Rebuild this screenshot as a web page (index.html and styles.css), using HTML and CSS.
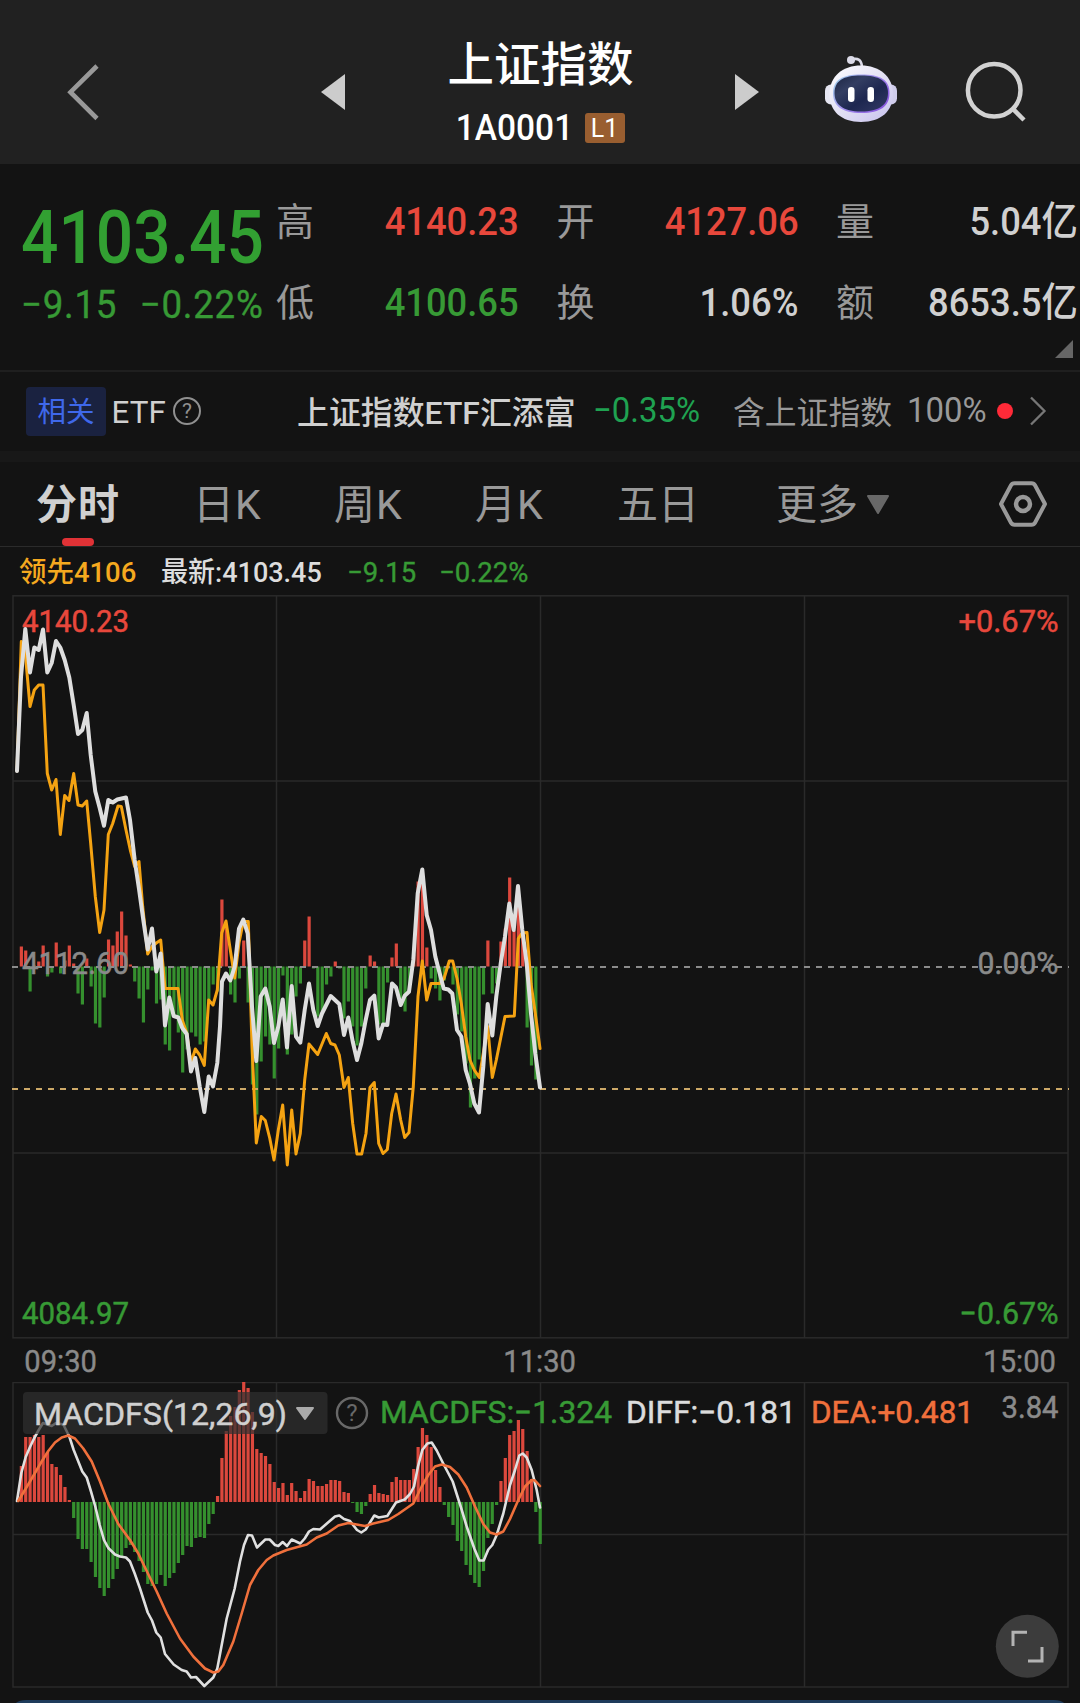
FILE: index.html
```
<!DOCTYPE html>
<html lang="zh-CN">
<head>
  <meta charset="UTF-8" />
  <meta name="viewport" content="width=device-width, initial-scale=1" />
  <title>上证指数 1A0001</title>
  <link rel="stylesheet" href="styles.css">
</head>
<body>
  <header class="header">
    <svg class="back" width="46" height="70" viewBox="60 60 46 70"><path d="M97 66L70.500 92.200L97 118.500" fill="none" stroke="#999" stroke-width="4.600"/></svg>
    <svg class="prev" width="24" height="36" viewBox="0 0 24 36"><path d="M24 0V36L0 18z" fill="#ccc"/></svg>
    <div class="title">
      <h1>上证指数</h1>
      <div class="code"><span class="code-num">1A0001</span><span class="level">L1</span></div>
    </div>
    <svg class="next" width="24" height="36" viewBox="0 0 24 36"><path d="M0 0V36L24 18z" fill="#ccc"/></svg>
    <svg class="robot" width="74" height="72" viewBox="824 54 74 72">
      <defs>
        <linearGradient id="shell" x1="0" y1="0" x2="0.900" y2="1">
          <stop offset="0" stop-color="#ffffff"/><stop offset="0.500" stop-color="#e4e2f4"/><stop offset="1" stop-color="#c9c4ee"/>
        </linearGradient>
        <linearGradient id="rim" x1="0" y1="0" x2="1" y2="0.600">
          <stop offset="0" stop-color="#9fd8ea"/><stop offset="0.500" stop-color="#a493ee"/><stop offset="1" stop-color="#8b5be0"/>
        </linearGradient>
        <linearGradient id="face" x1="0" y1="0" x2="1" y2="1">
          <stop offset="0" stop-color="#1c2543"/><stop offset="0.300" stop-color="#333e62"/><stop offset="0.600" stop-color="#1d2750"/><stop offset="1" stop-color="#343a66"/>
        </linearGradient>
      </defs>
      <path d="M851.500 59.500C858 57.500 861.500 60 862 67" fill="none" stroke="#dcdbe8" stroke-width="2.600"/>
      <circle cx="851" cy="60" r="4" fill="#dcdbe8"/>
      <rect x="825" y="84.500" width="12" height="20" rx="6" fill="#e6e6f2"/>
      <rect x="885" y="84.500" width="12" height="20" rx="6" fill="#d0cdec"/>
      <path d="M861 65.500C879 65.500 893 76 893 94C893 111 881 122 861 122C841 122 829.500 111 829.500 94C829.500 76 843 65.500 861 65.500z" fill="url(#shell)"/>
      <path d="M861 74.500C881 74.500 889.500 80 889.500 93C889.500 106 881 113 861 113C842 113 833 106 833 93C833 80 842 74.500 861 74.500z" fill="url(#rim)"/>
      <path d="M861 75.500C879.500 75.500 888 81 888 93C888 104.500 879.500 111.500 861 111.500C843 111.500 834.500 104.500 834.500 93C834.500 81 843 75.500 861 75.500z" fill="url(#face)"/>
      <rect x="848" y="87" width="6.500" height="15" rx="3.200" fill="#fff"/>
      <rect x="867.500" y="87" width="6.500" height="15" rx="3.200" fill="#fff"/>
    </svg>
    <svg class="search" width="62" height="64" viewBox="964 60 62 64"><circle cx="994.200" cy="90.300" r="26.300" fill="none" stroke="#d2d2d2" stroke-width="4.500"/><path d="M1012.500 108.500L1024 120" stroke="#d2d2d2" stroke-width="4.500"/></svg>
  </header>

  <section class="quote">
    <div class="price-box">
      <div class="price">4103.45</div>
      <div class="change down"><span>−9.15</span><span>−0.22%</span></div>
    </div>
    <div class="stats">
      <div class="stat"><label>高</label><b class="up">4140.23</b></div>
      <div class="stat"><label>开</label><b class="up">4127.06</b></div>
      <div class="stat"><label>量</label><b>5.04<i>亿</i></b></div>
      <div class="stat"><label>低</label><b class="down">4100.65</b></div>
      <div class="stat"><label>换</label><b>1.06%</b></div>
      <div class="stat"><label>额</label><b>8653.5<i>亿</i></b></div>
    </div>
    <div class="corner"></div>
  </section>

  <section class="etf">
    <span class="tag">相关</span>
    <span class="etf-label">ETF</span>
    <span class="help">?</span>
    <span class="etf-name">上证指数ETF汇添富</span>
    <span class="etf-rate">−0.35%</span>
    <span class="etf-hold">含上证指数</span>
    <span class="etf-pct">100%</span>
    <span class="dot"></span>
    <svg class="arrow" width="18" height="32" viewBox="0 0 18 32"><path d="M2 2.500L15.500 16L2 29.500" fill="none" stroke="#777" stroke-width="2.300"/></svg>
  </section>

  <nav class="tabs">
    <span class="tab active">分时</span>
    <span class="tab">日K</span>
    <span class="tab">周K</span>
    <span class="tab">月K</span>
    <span class="tab">五日</span>
    <span class="tab">更多<svg width="24" height="20" viewBox="0 0 24 20"><path d="M2 1H22L12 18z" fill="#686868" stroke="#686868" stroke-width="2" stroke-linejoin="round"/></svg></span>
    <svg class="setting" width="52" height="50" viewBox="-26 -25 52 50"><path d="M-22 0L-12 -18.800Q-11 -20.700 -8.500 -20.700H8.500Q11 -20.700 12 -18.800L22 0L12 18.800Q11 20.700 8.500 20.700H-8.500Q-11 20.700 -12 18.800z" fill="none" stroke="#999" stroke-width="4" stroke-linejoin="round"/><circle r="7" fill="none" stroke="#999" stroke-width="4.500"/></svg>
  </nav>

  <div class="legend">
    <span class="lead">领先4106</span>
    <span class="last">最新:4103.45</span>
    <span class="down diff">−9.15</span>
    <span class="down">−0.22%</span>
  </div>

  <svg class="chart" id="minuteChart" width="1080" height="745" viewBox="0 595 1080 745">
    <g class="grid">
      <rect x="13" y="595.800" width="1055" height="742"/>
      <path d="M13 781H1068M13 1153H1068M276.500 596V1338M540.500 596V1338M804.500 596V1338"/>
    </g>
    <g id="minuteBars"></g>
    <path class="dash zero" d="M12 967H1069"/>
    <path class="dash now" d="M12 1089H1069"/>
    <g class="axis">
      <text class="up" x="22" y="632" textLength="107">4140.23</text>
      <text class="up" x="958.500" y="632" textLength="100">+0.67%</text>
      <text x="22" y="973.500" textLength="107">4112.60</text>
      <text x="977.500" y="973.500" textLength="81">0.00%</text>
      <text class="down" x="22" y="1323.500" textLength="107">4084.97</text>
      <text class="down" x="959.500" y="1323.500" textLength="99">−0.67%</text>
    </g>
    <polyline class="line avg" points="17,771 21.3,641.5 25.3,653.5 30,706.5 34.3,690 38.7,685 43,685 47.3,773.5 51.7,790 56,779.5 60.3,834.5 64.7,795.5 69,800.5 73.7,773.5 78,805 82.3,806 86.7,801 90.7,843.5 95.3,896.5 99.7,932.5 104,910 108.3,834.5 112.7,823.5 118,806 121.3,806.5 126,830 130.3,850 134.7,866.5 139,861.5 142.7,906.5 147.7,954 152,946.5 156.3,943 160.7,940 165,988.5 178,988.5 182.3,1020 186.7,1033 191,1063 195.3,1049 199.7,1055 204.3,1065.5 208.7,1000 213,1005 217.3,990 221.7,933 226,921 230.3,950 234.7,978 239,943 243.3,921.5 248.3,921.5 252,1046.5 256.3,1143 261.3,1116.5 265.3,1120.5 269.7,1138 274,1160 278.3,1130 282.7,1105 287.3,1165 291.7,1110 296,1154 300.3,1133.5 304.7,1080 309,1044 317.7,1054.5 326.3,1033.5 330.7,1043.5 335,1045 339.3,1055 344,1087.5 348.3,1077.5 352.7,1123.5 357,1154 361.7,1154 366,1133.5 370,1087.5 374.3,1082.5 378.7,1143.5 383,1153.5 387.3,1149.5 391.7,1113.5 396,1094 400.7,1120 404.7,1137.5 409,1132.5 413.3,1086.5 418,996.5 422.3,961 426.7,1000 431,983.5 439.7,983.5 444,978.5 449.3,961 452.7,961 457,978.5 461.3,1003.5 465.7,1036.5 470,1060 474.3,1070 479.3,1077.5 487.7,1026.5 492.3,1077.5 496.3,1060 505,1016.5 514.3,1016 518.3,938.5 522.3,933 527,932.5 531,983.5 535.3,1013.5 540,1048.5"/>
    <polyline class="line last-line" points="17,771 21,677 25.3,629 30,672.5 34.3,647.5 38.7,650 43,629.5 47.3,672.5 51.7,663 56,641 60.3,647.5 64.7,660 69.3,677.5 73.7,705 78,734 82.3,730 86.7,713 90.7,755 95.3,791.5 99.7,808 104,825.7 108.3,800 112.7,802.5 117.3,799.5 126,797.5 130,820 134.7,860 139,889 143.3,920 147.7,949.5 152,928.5 156.3,971.5 160.7,953.5 165,1025.5 169.3,997.5 173.7,1016 178.3,1017.5 182.3,1028 186.7,1034 191,1071.5 195.3,1058 199.7,1086.5 204.3,1112 208.7,1076.5 213,1086.5 217.3,1063 220,1026.5 222,981.5 226,973.5 230.3,980.5 234.7,966.5 239,928.5 243.3,919.5 247.7,933.5 252,1006.5 256.3,1061 260.7,996.5 265.3,988.5 269.7,1006.5 274,1043 278.3,1026.5 282.7,999.5 287,1047.5 291.7,986 296,1036.5 300.3,1042.7 304.7,1010 309,983.5 313.3,1010 317.7,1026 322,1013.5 330.7,996 339.3,1004 344,1035 348.3,1017.5 352.7,1041.5 357,1060 361.3,1043.5 365.7,1020 370,1000 374.3,995.7 378.7,1038.5 383,1024.5 387.3,1025 392,983.5 396,987.5 400.7,1005 404.7,995.7 409,991.7 413.3,960 417.7,893.5 422.3,869.5 426.7,915 431,930 435.3,956.5 439.7,973.5 443.7,988.5 448.3,989.5 452.3,993.5 457,1030 461.3,1036.5 465.7,1070 470,1084 474.3,1103.5 479,1112.5 483.3,1066.5 487.7,1004 492.3,1035.5 496.3,996.5 500.7,963.5 505,936.5 509.3,903.5 513.7,930 518,886 522.3,930 526.7,963.5 531,1013.5 535.3,1053.5 540,1087.5"/>
  </svg>

  <div class="times"><span>09:30</span><span>11:30</span><span>15:00</span></div>

  <svg class="chart" id="macdChart" width="1080" height="321" viewBox="0 1382 1080 321">
    <g class="grid">
      <rect x="13" y="1382.500" width="1055" height="304.500"/>
      <path d="M13 1534.500H1068M276.500 1382V1687M540.500 1382V1687M804.500 1382V1687"/>
    </g>
    <g id="macdBars"></g>
    <polyline class="line thin white" points="17,1501 21.3,1473 25.7,1457 30,1447 34.3,1438 38.7,1430 43,1423 51.7,1426 56,1423 63.3,1424.5 69.3,1436.5 73.7,1450 82.3,1471.5 86.7,1477.5 91,1491.5 95.3,1506.5 99.7,1525 104,1540 108.3,1548 115,1554.5 120,1556.5 126,1557.5 130,1561.5 134.7,1573.5 140,1588.5 147.7,1612.5 152,1620.5 156.3,1632.5 160.7,1637.5 165,1654 173.7,1664.5 181.7,1670 186.7,1671.5 191,1677.5 196,1677 204.3,1686 213.3,1677.5 217.3,1668.5 221.7,1645 226.7,1618.5 234.7,1588.5 240,1561.5 244,1545 248,1535 252,1535.5 257,1547.5 265.3,1539.5 269.7,1539.5 275,1545 278.3,1546 282.7,1542 287,1546 291.7,1539.5 300.3,1543.5 304.7,1538.5 309,1531.5 313.3,1529 320,1529.5 326.3,1524 335,1516.5 339.3,1515.5 344,1519 350,1521 357,1530 361.3,1532.5 365.7,1529.5 374.3,1515.5 378.7,1517.5 387.3,1516 396,1502.5 404.7,1499.5 410,1494 414,1486.5 418,1466.5 422.3,1450 427.3,1443.5 431.7,1442.5 436.7,1450.5 444,1465 452.7,1481.5 461.3,1508.5 466.7,1526.5 474.3,1548.5 479.3,1560.5 483.7,1560.5 488.3,1549.5 492.3,1545 496.7,1535 503.3,1513.5 510,1485 515,1470 519.3,1455.5 522.7,1453.5 526.7,1457.5 531.7,1470 536.7,1490 540,1507.5"/>
    <polyline class="line thin orange" points="18.3,1501 30,1481.5 41.7,1461.5 48.3,1451 55,1442.5 61.7,1437.5 68.3,1435.5 75,1438.5 83.3,1448.5 91.7,1461.5 100,1481.5 108.3,1503.5 118.3,1524 130,1540 138.3,1553.5 145,1567.5 156.7,1591.5 166.7,1613.5 180,1638.5 193.3,1656.5 205,1668.5 213.3,1672.5 218.3,1671.5 223.3,1665 233.3,1641.5 241.7,1613.5 250,1585 258.3,1570 266.7,1560 273.3,1555.5 286.7,1550 306.7,1544.5 316.7,1537.5 326.7,1533.5 338.3,1525.5 348.3,1523 365,1526 373.3,1523.5 388.3,1520 398.3,1514 413.3,1503.5 421.7,1486.5 428.3,1475 435,1466.5 441.7,1464.5 450,1467 458.3,1474.5 466.7,1487.5 475,1506.5 483.3,1524 490,1532.5 496.7,1534.5 503.3,1531.5 510,1519 518.3,1500 525,1486.5 531.7,1480 535,1480.5 540,1486"/>
    <rect class="picker" x="23" y="1392" width="304.500" height="42" rx="4"/>
    <path d="M297 1408H313L305 1419z" fill="#aaa" stroke="#aaa" stroke-width="2" stroke-linejoin="round"/>
    <circle cx="352" cy="1413" r="15" fill="none" stroke="#686868" stroke-width="2.400"/>
    <g class="axis macd-text">
      <text class="name" x="34" y="1425" textLength="253">MACDFS(12,26,9)</text>
      <text class="q" x="352" y="1421" text-anchor="middle">?</text>
      <text class="down" x="380" y="1423" textLength="232">MACDFS:−1.324</text>
      <text class="white-text" x="626" y="1423" textLength="170">DIFF:−0.181</text>
      <text class="orange-text" x="811" y="1423" textLength="163">DEA:+0.481</text>
      <text x="1001.500" y="1418" textLength="57">3.84</text>
    </g>
    <circle cx="1027.300" cy="1646.300" r="31.500" fill="#3c3c3c"/>
    <path d="M1013 1646V1632.200H1027M1042 1647V1661H1028" fill="none" stroke="#b4b4b4" stroke-width="3"/>
    <path d="M12 1710Q14 1700 26 1700H1054Q1066 1700 1068 1710z" fill="#1e3b5b"/>
  </svg>

  <script>
    // one value per trading minute, bar height in px (positive = up)
    const minute = [
      0, 20, 16, -25, 1, 5, 21, -10, -6, 24, -7, 6, 21, 3, -27, -38, 8, -20, -57, -61,
      -31, 27, 21, 35, 55, 31, 2, -15, -32, -56, -23, -4, -37, -33, -78, -84, -50, -66, -106, -83,
      -66, -70, -78, -75, -35, -18, -25, 67, 40, -28, -36, -12, 26, -36, -118, -148, -95, -70, -78, -112,
      -82, -9, -88, -68, -30, -17, 26, 50, -2, -50, -45, -18, -10, 5, -2, -52, -35, -60, -79, -60,
      -22, 11, 5, -58, -60, -16, 9, 23, -32, -45, -25, 12, 85, 93, 19, -12, -22, -34, -14, -2,
      -18, -48, -65, -97, -141, -112, -93, -28, 26, -27, -17, 25, 38, 89, 36, 60, 30, -61, -99, -113, 0
    ];
    const macd = [
      0, 36, 65, 65, 67, 65, 67, 50, 38, 35, 27, 15, 2, -16, -37, -47, -47, -60, -75, -86,
      -94, -86, -77, -67, -55, -46, -43, -50, -59, -70, -82, -84, -82, -73, -84, -76, -71, -61, -53, -44,
      -45, -36, -35, -36, -22, -12, 6, 44, 71, 86, 95, 112, 121, 114, 90, 53, 49, 46, 38, 20,
      14, 19, 7, 19, 11, 4, 11, 23, 21, 16, 16, 18, 22, 22, 21, 10, 9, -1, -10, -12,
      -4, 8, 17, 9, 8, 7, 20, 25, 22, 22, 22, 33, 55, 74, 67, 55, 32, 15, -3, -15,
      -23, -39, -49, -63, -73, -81, -85, -69, -36, -22, -3, 21, 44, 67, 71, 82, 73, 51, 23, -10, -42
    ];

    function drawBars(id, data, zero) {
      const group = document.getElementById(id);
      data.forEach((v, i) => {
        if (!v) return;
        const bar = document.createElementNS('http://www.w3.org/2000/svg', 'rect');
        bar.setAttribute('x', (17 + i * 4.36 - 1.6).toFixed(2));
        bar.setAttribute('y', v > 0 ? zero - v : zero);
        bar.setAttribute('width', 3.2);
        bar.setAttribute('height', Math.abs(v));
        bar.setAttribute('class', v > 0 ? 'bar-up' : 'bar-down');
        group.appendChild(bar);
      });
    }

    drawBars('minuteBars', minute, 966.5);
    drawBars('macdBars', macd, 1502);

    // squeeze the axis labels into their slots
    document.querySelectorAll('text[textLength]').forEach(t => t.setAttribute('lengthAdjust', 'spacingAndGlyphs'));
  </script>
</body>
</html>
```
FILE: styles.css
```
* { box-sizing: border-box; }
body {
  margin: 0;
  width: 1080px;
  height: 1703px;
  overflow: hidden;
  background: #131313;
  color: #d0d0d0;
  font-family: Roboto, "Noto Sans CJK SC", sans-serif;
}
svg { display: block; }
.up { color: #e8483c; fill: #e8483c; stroke: #e8483c; }
.down { color: #379a35; fill: #379a35; stroke: #379a35; }

/* header */
.header {
  display: grid;
  grid-template-columns: 261px 119px 201px 163px 140px 82px;
  height: 164px;
  padding-left: 60px;
  padding-top: 30px;
  background: #212121;
}
.back { margin-top: 30px; }
.prev, .next { margin-top: 44px; }
.next { margin-left: 94px; }
.robot { margin-left: 20px; margin-top: 24px; }
.search { margin-left: 20px; margin-top: 30px; }
.title { text-align: center; color: #fff; }
h1 {
  margin: 0;
  font-size: 46.500px;
  font-weight: 500;
  line-height: 71px;
}
.code {
  display: flex;
  justify-content: center;
  align-items: center;
  gap: 11px;
  height: 34px;
  margin-top: 10px;
  margin-left: -9px;
}
.code-num {
  font-size: 36px;
  font-weight: 500;
  transform: scaleX(0.93);
  transform-origin: right;
}
.level {
  width: 40px;
  height: 30px;
  border-radius: 3px;
  background: #995e30;
  font-size: 25px;
  line-height: 31px;
}

/* quote */
.quote {
  position: relative;
  display: flex;
  height: 208px;
  padding: 17px 0 0 21px;
  border-bottom: 2px solid #1f1f1f;
}
.price-box { width: 256px; }
.price {
  margin-top: 16px;
  font-size: 74px;
  font-weight: 500;
  line-height: 82px;
  color: #32a032;
  transform: scaleX(0.89);
  transform-origin: left;
}
.change {
  display: flex;
  justify-content: space-between;
  width: 258px;
  margin-top: 4px;
  font-size: 39px;
  line-height: 44px;
  letter-spacing: 0.800px;
  -webkit-text-stroke: 0.400px;
  transform: scaleX(0.94);
  transform-origin: left;
}
.stats {
  display: grid;
  grid-template-columns: 242px 241px 241px;
  grid-auto-rows: 81px;
  column-gap: 38.500px;
}
.stat {
  display: flex;
  justify-content: space-between;
  align-items: center;
}
.stat label {
  margin-top: -7px;
  margin-left: -1px;
  font-size: 38px;
  color: #999;
}
.stat b {
  font-size: 39.500px;
  font-weight: 500;
  line-height: 44px;
  transform: scaleX(0.92);
  transform-origin: right;
}
.stat i { font-style: normal; }
.corner {
  position: absolute;
  right: 7px;
  bottom: 12px;
  border: 9px solid transparent;
  border-right-color: #666;
  border-bottom-color: #666;
}

/* related etf */
.etf {
  display: flex;
  align-items: center;
  height: 90px;
  padding-left: 26px;
  padding-bottom: 1px;
  border-bottom: 11px solid #181818;
  white-space: nowrap;
}
.tag {
  width: 80px;
  height: 49px;
  border-radius: 4px;
  background: #1a2240;
  color: #3f68ea;
  font-size: 28.500px;
  line-height: 52px;
  text-align: center;
}
.etf-label { width: 60px; margin-top: 2px; margin-left: 5px; font-size: 32px; transform: scaleX(0.98); }
.help {
  width: 28px;
  height: 28px;
  margin-left: 2px;
  border: 2px solid #909090;
  border-radius: 50%;
  color: #909090;
  font-size: 21px;
  line-height: 24px;
  text-align: center;
}
.etf-name { width: 296px; margin-top: -3px; margin-left: 96px; font-size: 31.900px; font-weight: 500; }
.etf-rate, .etf-pct {
  margin-top: -2px;
  font-size: 35px;
  transform: scaleX(0.94);
  transform-origin: left;
}
.etf-rate { width: 140px; color: #1fa251; }
.etf-hold { width: 174px; margin-top: -3px; font-size: 31.800px; color: #999; }
.etf-pct { width: 90px; color: #999; }
.dot {
  width: 16px;
  height: 16px;
  border-radius: 50%;
  background: #ff2a38;
}
.arrow { margin-left: 16px; }

/* period tabs */
.tabs {
  display: flex;
  height: 85px;
  padding-left: 36px;
  border-bottom: 1px solid #2b2b2b;
  font-size: 41px;
  line-height: 86px;
  color: #999;
}
.tab { display: flex; width: 141px; }
.tab:nth-child(1) { width: 157px; }
.tab:nth-child(4) { width: 142px; }
.tab:nth-child(5) { width: 159px; }
.tab:nth-child(6) { width: 221px; }
.tab:nth-child(-n+4) { letter-spacing: 1px; }
.tab svg { margin: 33px 0 0 8px; }
.tab.active {
  position: relative;
  color: #d0d0d0;
  font-weight: 700;
}
.tab.active::after {
  content: "";
  position: absolute;
  left: 26px;
  bottom: 0;
  width: 32px;
  height: 8px;
  border-radius: 4px;
  background: #e03236;
}
.setting { margin-top: 17px; }

.legend {
  display: flex;
  height: 48px;
  padding-left: 19px;
  font-size: 28px;
  font-weight: 500;
  line-height: 52px;
  white-space: nowrap;
}
.legend span { transform: scaleX(0.98); transform-origin: left; }
.legend .lead { width: 142px; color: #f5a91f; }
.legend .last { width: 186px; color: #ddd; transform: scaleX(0.965); }
.legend .down { font-weight: 400; -webkit-text-stroke: 0.400px; }
.legend .diff { width: 92px; }

/* charts */
.grid rect, .grid path { fill: none; stroke: #2a2a2a; stroke-width: 1.500; }
.dash { fill: none; stroke-width: 1.800; stroke-dasharray: 6 6; }
.zero { stroke: #8c8c8c; }
.now { stroke: #cda968; }
.bar-up { fill: #dc483d; }
.bar-down { fill: #35902e; }
.axis text { font-size: 31px; stroke-width: 0.500; }
.axis text:not([class]) { fill: #8a8a8a; stroke: #8a8a8a; }
.line {
  fill: none;
  stroke-width: 3;
  stroke-linejoin: round;
  stroke-linecap: round;
}
.avg { stroke: #f5a312; }
.last-line { stroke: #dedede; stroke-width: 4; }
.thin { stroke-width: 2.600; }
.white { stroke: #e0e0e0; }
.orange { stroke: #f0703c; }
.picker { fill: #303030; fill-opacity: 0.700; }
.macd-text .name { fill: #d0d0d0; stroke: #d0d0d0; font-size: 32px; }
.macd-text .q { fill: #686868; font-size: 24px; }
.white-text { fill: #dcdcdc; stroke: #dcdcdc; }
.orange-text { fill: #f0703c; stroke: #f0703c; }
.times {
  display: flex;
  justify-content: space-between;
  height: 42px;
  padding: 0 22px;
  font-size: 31px;
  line-height: 43px;
  color: #8a8a8a;
  -webkit-text-stroke: 0.400px;
}
.times span { transform: scaleX(0.94); }
```
